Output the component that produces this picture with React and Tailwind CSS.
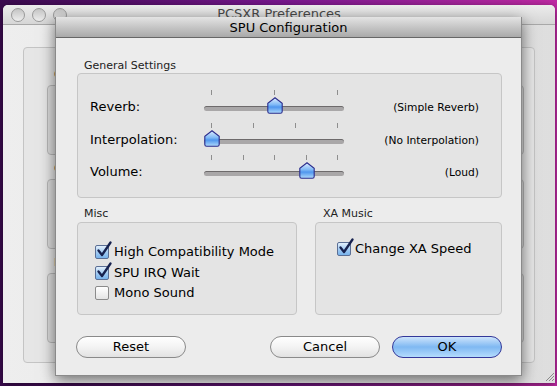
import React from "react"

const font = { fontFamily: '"DejaVu Sans", "Liberation Sans", sans-serif' }

function Knob({ left }) {
    return (
        <svg width="16" height="17" viewBox="0 0 16 17" className="absolute top-[7px]" style={{ left: left - 8 }}>
            <defs>
                <linearGradient id="kg" x1="0" y1="0" x2="0" y2="1">
                    <stop offset="0" stopColor="#e2efff" />
                    <stop offset="0.45" stopColor="#7fb9f6" />
                    <stop offset="0.6" stopColor="#4f96ee" />
                    <stop offset="1" stopColor="#b0dbfc" />
                </linearGradient>
            </defs>
            <path d="M8 0.7 L15.2 6.2 L15.2 14.5 Q15.2 16.3 13.4 16.3 L2.6 16.3 Q0.8 16.3 0.8 14.5 L0.8 6.2 Z" fill="url(#kg)" stroke="#2b2c8c" strokeWidth="1.1" />
        </svg>
    )
}

function Slider({ ticks, value }) {
    return (
        <div className="relative w-[140px] h-[32px] shrink-0">
            {ticks.map((t, i) => (
                <div key={i} className="absolute top-0 w-px h-[5px] bg-[#8e8e8e]" style={{ left: 7 + t * 126 }} />
            ))}
            <div className="absolute left-0 right-0 top-[16px] h-[5px] rounded-full bg-[#a9a7a8] border-t border-[#6d6a6b]" />
            <Knob left={8 + value * 126} />
        </div>
    )
}

function Check({ on }) {
    return (
        <div className="relative w-[14px] h-[14px] shrink-0">
            <div className={on
                ? "w-[14px] h-[14px] rounded-[2px] border border-[#5b6f95] bg-gradient-to-b from-[#e3f0fc] via-[#a5cdf3] to-[#78b3ec]"
                : "w-[14px] h-[14px] rounded-[2px] border border-[#8b8b8b] bg-gradient-to-b from-[#ffffff] to-[#e4e4e4]"} />
            {on && (
                <svg width="16" height="17" viewBox="0 0 16 17" className="absolute left-[1px] top-[-4px]">
                    <path d="M2.5 9.5 L6 14 L14.5 1.5" fill="none" stroke="#17224f" strokeWidth="2.3" strokeLinecap="round" strokeLinejoin="round" />
                </svg>
            )}
        </div>
    )
}

function Button({ label, primary }) {
    return (
        <div className={primary
            ? "w-[110px] h-[22px] rounded-full border border-[#34389a] bg-gradient-to-b from-[#cde4fb] via-[#7fb8f2] to-[#b4dcfd] flex items-center justify-center text-[13px] text-black"
            : "w-[110px] h-[22px] rounded-full border border-[#8a8a8a] bg-gradient-to-b from-[#ffffff] via-[#f3f3f3] to-[#e2e2e2] flex items-center justify-center text-[13px] text-black"}>
            {label}
        </div>
    )
}

function Light() {
    return <div className="w-[14px] h-[14px] rounded-full border border-[#9a9a9a] bg-gradient-to-b from-[#c4c4c4] to-[#eeeeee]" />
}

export default function App() {
    const rows = [
        { label: "Reverb:", ticks: [0, 0.5, 1], value: 0.5, text: "(Simple Reverb)" },
        { label: "Interpolation:", ticks: [0, 1 / 3, 2 / 3, 1], value: 0, text: "(No Interpolation)" },
        { label: "Volume:", ticks: [0, 0.25, 0.5, 0.75, 1], value: 0.75, text: "(Loud)" },
    ]
    return (
        <div className="relative w-[557px] h-[386px] overflow-hidden bg-gradient-to-r from-[#3c0b50] via-[#7a1890] to-[#c22aa6]" style={font}>
            {/* back window */}
            <div className="absolute left-[3px] top-[5px] w-[552px] h-[378px] rounded-t-[5px] bg-[#e9e9e9] flex flex-col shadow-[0_2px_8px_rgba(0,0,0,0.5)]">
                <div className="h-[20px] rounded-t-[5px] bg-gradient-to-b from-[#ececec] to-[#d6d6d6] border-b border-[#a8a8a8] flex items-center relative">
                    <div className="flex gap-[7px] pl-[8px]">
                        <Light />
                        <Light />
                        <Light />
                    </div>
                    <div className="absolute left-0 right-0 top-[2px] flex justify-center text-[13px] leading-[13px] text-[#4a4a4a]">PCSXR Preferences</div>
                </div>
                <div className="flex-1 bg-gradient-to-r from-[#eeeeee] to-[#dedede] pt-[22px] pl-[20px] pr-[20px] pb-[20px]">
                    <div className="h-full rounded-[4px] border border-[#c4c4c4] bg-[#e6e6e6] pl-[23px] pr-[10px] pt-[20px] flex flex-col">
                        {["G", "C", "P"].map((g, i) => (
                            <div key={i} className="flex flex-col mb-[7px]">
                                <div className="text-[11px] leading-[14px] text-[#333] pl-[7px] h-[17px]">{g}</div>
                                <div className="h-[70px] rounded-[4px] border border-[#b8b8b8] bg-[#dcdcdc]" />
                            </div>
                        ))}
                    </div>
                </div>
            </div>
            {/* resize grip */}
            <svg width="10" height="10" viewBox="0 0 10 10" className="absolute left-[545px] top-[372px]">
                <path d="M1 9 L9 1 M4 9 L9 4 M7 9 L9 7" stroke="#8a8a8a" strokeWidth="1" />
            </svg>

            {/* sheet */}
            <div className="absolute left-[55px] top-[17px] w-[467px] h-[359px] flex flex-col bg-[#ececec] shadow-[0_4px_14px_rgba(0,0,0,0.55)] border-x border-b border-[#8a8a8a]">
                <div className="h-[21px] bg-gradient-to-b from-[#e4e4e4] to-[#a9a9a9] border-b border-[#666] flex items-center justify-center text-[13px] leading-[13px] text-black">
                    SPU Configuration
                </div>
                <div className="flex-1 flex flex-col pl-[21px] pr-[19px]">
                    <div className="text-[11px] text-[#222] pl-[7px] pt-[21px] h-[35px] leading-[14px]">General Settings</div>
                    <div className="h-[125px] rounded-[4px] border border-[#c6c6c6] bg-[#e4e4e4] pt-[16px] pl-[12px] pr-[22px] flex flex-col">
                        {rows.map((r, i) => (
                            <div key={i} className="h-[32.5px] flex items-start">
                                <div className="w-[114px] h-full pt-[2px] flex items-center text-[13px] leading-[16px] text-black">{r.label}</div>
                                <Slider ticks={r.ticks} value={r.value} />
                                <div className="flex-1 h-full pt-[3px] flex items-center justify-end text-[10.7px] leading-[13px] text-black">{r.text}</div>
                            </div>
                        ))}
                    </div>
                    <div className="flex gap-[18px] mt-[9px]">
                        <div className="w-[220px] flex flex-col">
                            <div className="text-[11px] text-[#222] pl-[7px] h-[15px] leading-[14px]">Misc</div>
                            <div className="h-[93px] rounded-[4px] border border-[#c6c6c6] bg-[#e4e4e4] pt-[19px] pl-[17px] flex flex-col">
                                {[["High Compatibility Mode", true], ["SPU IRQ Wait", true], ["Mono Sound", false]].map(([t, on], i) => (
                                    <div key={i} className="h-[20.5px] flex items-center gap-[5px] text-[13px] leading-[16px] text-black">
                                        <Check on={on} />
                                        <span>{t}</span>
                                    </div>
                                ))}
                            </div>
                        </div>
                        <div className="flex-1 flex flex-col">
                            <div className="text-[11px] text-[#222] pl-[8px] h-[15px] leading-[14px]">XA Music</div>
                            <div className="h-[93px] rounded-[4px] border border-[#c6c6c6] bg-[#e4e4e4] pt-[16px] pl-[21px] flex flex-col">
                                <div className="h-[20.5px] flex items-center gap-[4px] text-[13px] leading-[16px] text-black">
                                    <Check on={true} />
                                    <span>Change XA Speed</span>
                                </div>
                            </div>
                        </div>
                    </div>
                    <div className="flex items-center mt-[21px] -ml-[1px]">
                        <Button label="Reset" />
                        <div className="flex-1" />
                        <Button label="Cancel" />
                        <div className="w-[12px]" />
                        <Button label="OK" primary />
                    </div>
                </div>
            </div>
        </div>
    )
}
